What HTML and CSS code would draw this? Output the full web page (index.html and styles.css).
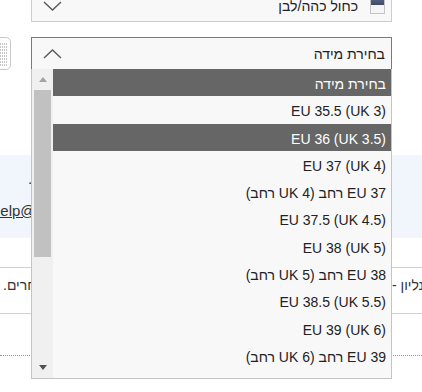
FILE: index.html
```html
<!DOCTYPE html>
<html lang="he" dir="rtl">
<head>
    <meta charset="UTF-8">
    <meta name="viewport" content="width=device-width, initial-scale=1.0">
    <title>בחירת מידה</title>
    <link rel="stylesheet" href="styles.css">
</head>
<body>
    <div class="page">
        <div class="field">
            <div class="select">
                <span class="swatch"></span>
                <span class="select-label">כחול כהה/לבן</span>
                <svg class="chevron" width="19" height="10" viewBox="0 0 19 10"><path d="M1 1l8.5 8 8.5-8"/></svg>
            </div>
        </div>

        <div class="field">
            <div class="select select-open">
                <span class="select-label">בחירת מידה</span>
                <svg class="chevron" width="19" height="10" viewBox="0 0 19 10"><path d="M1 9l8.5-8 8.5 8"/></svg>

                <div class="dropdown">
                    <ul class="options">
                        <li class="option active">בחירת מידה</li>
                        <li class="option">EU 35.5 (UK 3)</li>
                        <li class="option active">EU 36 (UK 3.5)</li>
                        <li class="option">EU 37 (UK 4)</li>
                        <li class="option">EU 37 רחב (UK 4 רחב)</li>
                        <li class="option">EU 37.5 (UK 4.5)</li>
                        <li class="option">EU 38 (UK 5)</li>
                        <li class="option">EU 38 רחב (UK 5 רחב)</li>
                        <li class="option">EU 38.5 (UK 5.5)</li>
                        <li class="option">EU 39 (UK 6)</li>
                        <li class="option">EU 39 רחב (UK 6 רחב)</li>
                        <li class="option">EU 39.5 (UK 6.5)</li>
                    </ul>
                    <div class="scrollbar">
                        <div class="scroll-btn"><span class="arrow-up"></span></div>
                        <div class="scroll-track"><div class="scroll-thumb"></div></div>
                        <div class="scroll-btn"><span class="arrow-down"></span></div>
                    </div>
                </div>
            </div>
            <button class="size-chart" type="button">
                <svg width="22" height="24" viewBox="0 0 22 24">
                    <path d="M2 2h18M2 5h18M2 8h18M2 11h18M2 14h18M2 17h18M2 20h18M2 23h18"/>
                </svg>
            </button>
        </div>

        <div class="notice">
            <p class="notice-line">לשאלות נוספות ניתן לפנות לשירות הלקוחות שלנו.</p>
            <p class="notice-mail">או בדוא״ל: <a href="#">help@shoes.co.il</a></p>
        </div>

        <div class="info-row">
            <span class="info-start">נליון - משלוח חינם</span>
            <span class="info-end">החזרות והחלפות על נעליים ומוצרים אחרים.</span>
        </div>

        <div class="dotted"></div>
    </div>
</body>
</html>
```

FILE: styles.css
```css
html, body {
    margin: 0;
    padding: 0;
}
body {
    font-family: "Liberation Sans", Arial, sans-serif;
    background: #fff;
    color: #333;
    overflow: hidden;
    width: 422px;
    height: 392px;
}
.page {
    margin-top: -11px;
}
.field {
    display: flex;
    align-items: center;
    margin-right: 30px;
    margin-bottom: 15px;
}
.select {
    position: relative;
    flex: none;
    display: flex;
    align-items: center;
    width: 361px;
    height: 33px;
    box-sizing: border-box;
    padding: 0 6px 0 11px;
    border: 1px solid #cdcdcd;
    background: #f8f8f8;
    font-size: 14px;
    color: #222;
}
.select-open {
    border-color: #7a7a7a;
    border-bottom-color: #cdcdcd;
}
.swatch {
    width: 15px;
    height: 16px;
    margin-left: 12px;
    border: 1px solid #c4c4c4;
    box-sizing: border-box;
    background: linear-gradient(to bottom, #55627f 0%, #3d4966 45%, #f4f4f4 45%);
}
.chevron {
    margin-right: auto;
}
.chevron path {
    fill: none;
    stroke: #5a5a5a;
    stroke-width: 1.4;
}
.dropdown {
    position: absolute;
    top: 100%;
    left: -1px;
    right: -1px;
    height: 310px;
    box-sizing: border-box;
    border: 1px solid #c4c4c4;
    border-top: none;
    background: #f8f8f8;
    display: flex;
    z-index: 5;
}
.options {
    flex: 1;
    list-style: none;
    margin: 0;
    padding: 0;
    overflow: hidden;
}
.option {
    height: 27.3px;
    box-sizing: border-box;
    padding: 3px 5px 0 0;
    line-height: 24.3px;
    white-space: nowrap;
    color: #222;
}
.option.active {
    background: #666;
    color: #fff;
}
.scrollbar {
    width: 21px;
    display: flex;
    flex-direction: column;
    background: #f0f0f0;
}
.scroll-btn {
    height: 21px;
    display: flex;
    align-items: center;
    justify-content: center;
}
.scroll-track {
    flex: 1;
}
.scroll-thumb {
    height: 167px;
    margin: 0 2px;
    background: #c1c1c1;
}
.arrow-up {
    width: 0;
    height: 0;
    border-left: 4.5px solid transparent;
    border-right: 4.5px solid transparent;
    border-bottom: 5px solid #a3a3a3;
}
.arrow-down {
    width: 0;
    height: 0;
    border-left: 4.5px solid transparent;
    border-right: 4.5px solid transparent;
    border-top: 5px solid #505050;
}
.size-chart {
    flex: none;
    width: 24px;
    height: 33px;
    margin-right: 20px;
    padding: 3px 0 0;
    border: 1px solid #c8c8c8;
    border-radius: 5px;
    background: #fff;
}
.size-chart path {
    stroke: #8c8c8c;
    stroke-width: 1;
    stroke-dasharray: 1 1;
}
.notice {
    margin-top: 85px;
    padding: 13px 40px 16px 0;
    background: #f0f6fc;
    font-size: 15px;
    line-height: 22px;
    color: #333;
}
.notice p {
    margin: 0;
    white-space: nowrap;
    text-align: left;
}
.notice-line {
    padding-left: 28px;
    margin-bottom: 10px !important;
}
.notice-mail {
    margin-left: -8px !important;
}
.notice-mail a {
    color: #333;
}
.info-row {
    display: flex;
    justify-content: space-between;
    margin-top: 29px;
    padding: 8px 0 19px 3px;
    border-top: 1px solid #d2d2d2;
    border-bottom: 1px solid #d2d2d2;
    font-size: 14px;
    line-height: 18px;
    white-space: nowrap;
    color: #333;
}
.info-start {
    margin-right: -2px;
}
.dotted {
    margin-top: 41px;
    border-top: 1px dotted #999;
}
```
